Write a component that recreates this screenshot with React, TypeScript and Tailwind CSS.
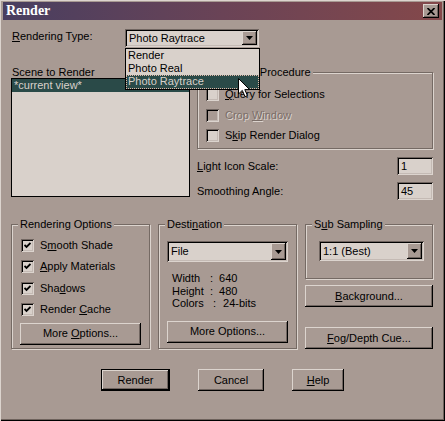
import React from "react";

const bg = "bg-[#a89a93]";
const raised = "shadow-[inset_-1px_-1px_0_#000,inset_1px_1px_0_#dcd4ce,inset_-2px_-2px_0_#706560]";
const sunken = "shadow-[inset_1px_1px_0_#706560,inset_-1px_-1px_0_#dcd4ce,inset_2px_2px_0_#000,inset_-2px_-2px_0_#c4bab4]";
const etched = "border border-[#756a64] shadow-[inset_1px_1px_0_#dcd4ce,1px_1px_0_#dcd4ce]";

function Arrow() {
    return (
        <svg width="7" height="4" viewBox="0 0 7 4"><path d="M0 0h7L3.5 4z" fill="#000" /></svg>
    );
}

function Combo({ value, w, h, children }: { value: string; w: string; h: string; children?: React.ReactNode }) {
    return (
        <div className={`relative ${w} ${h} bg-[#d9d1cb] ${sunken} flex items-center`}>
            <span className="pl-[4px] flex-1 leading-[13px]">{value}</span>
            <div className={`mr-[2px] w-[15px] h-[calc(100%-4px)] ${bg} ${raised} flex items-center justify-center`}>
                <Arrow />
            </div>
            {children}
        </div>
    );
}

function Btn({ w, h = "h-[22px]", def, children }: { w: string; h?: string; def?: boolean; children: React.ReactNode }) {
    return (
        <div className={`${w} ${h} ${def ? "border border-black" : ""} flex`}>
            <div className={`flex-1 ${raised} flex items-center justify-center`}>
                <span className="leading-[13px] whitespace-pre">{children}</span>
            </div>
        </div>
    );
}

function Check({ label, checked, disabled }: { label: React.ReactNode; checked?: boolean; disabled?: boolean }) {
    return (
        <div className="flex items-center h-[13px]">
            <div className={`w-[13px] h-[13px] ${disabled ? bg : "bg-[#d9d1cb]"} ${sunken} flex items-center justify-center`}>
                {checked && (
                    <svg width="7" height="7" viewBox="0 0 7 7"><path d="M0.5 3 L2.5 5 L6.5 1" stroke="#000" strokeWidth="1.8" fill="none" /></svg>
                )}
            </div>
            <span className={`ml-[6px] leading-[13px] whitespace-pre ${disabled ? "text-[#7b6e68] [text-shadow:1px_1px_0_#dcd4ce]" : ""}`}>{label}</span>
        </div>
    );
}

function Group({ title, className, children }: { title: React.ReactNode; className: string; children?: React.ReactNode }) {
    return (
        <div className={`relative ${etched} ${className}`}>
            <span className={`absolute -top-[7px] left-[6px] px-[2px] leading-[13px] whitespace-pre ${bg}`}>{title}</span>
            {children}
        </div>
    );
}

const U = ({ children }: { children: React.ReactNode }) => <span className="underline underline-offset-[1px]">{children}</span>;

export default function App() {
    return (
        <div className={`relative w-[445px] h-[421px] overflow-hidden ${bg} flex flex-col font-['Liberation_Sans',sans-serif] text-[11px] text-black shadow-[inset_1px_1px_0_#dcd4ce,inset_-1px_-1px_0_#000,inset_-2px_-2px_0_#6e625c]`}>
            {/* title bar */}
            <div className="mx-[3px] mt-[2px] h-[18px] bg-gradient-to-r from-[#483e60] via-[#6a4356] to-[#84484a] flex items-center justify-between pl-[3px] pr-[3px]">
                <span className="font-['Liberation_Serif',serif] font-bold text-[14px] leading-[16px] text-white">Render</span>
                <div className={`w-[16px] h-[14px] ${bg} ${raised} flex items-center justify-center`}>
                    <svg width="8" height="7" viewBox="0 0 8 7"><path d="M0.5 0 L7.5 7 M7.5 0 L0.5 7" stroke="#000" strokeWidth="1.7" /></svg>
                </div>
            </div>

            {/* rendering type */}
            <div className="mt-[9px] ml-[12px] flex h-[18px] relative z-10">
                <span className="w-[113px] leading-[13px] pt-[1px]"><U>R</U>endering Type:</span>
                <Combo value="Photo Raytrace" w="w-[134px]" h="h-[18px]">
                    <div className="absolute left-0 top-[19px] w-[135px] h-[42px] bg-[#d9d1cb] border border-black flex flex-col">
                        <div className="h-[13px] leading-[13px] pl-[2px]">Render</div>
                        <div className="h-[13px] leading-[13px] pl-[2px]">Photo Real</div>
                        <div className="h-[14px] leading-[13px] pl-[2px] bg-[#2a4a48] text-[#d9d1cb] outline-1 outline-dotted outline-[#e0b8a8] -outline-offset-1">Photo Raytrace</div>
                    </div>
                </Combo>
            </div>

            {/* scene + procedure */}
            <div className="mt-[19px] ml-[11px] flex h-[134px]">
                <div className="w-[179px] flex flex-col">
                    <span className="h-[12px] leading-[12px] pl-[1px]">Scene to Render</span>
                    <div className="h-[119px] bg-[#d9d1cb] border border-black">
                        <div className="h-[13px] leading-[13px] pl-[2px] bg-[#2a4a48] text-[#d9d1cb]">*current view*</div>
                    </div>
                </div>
                <div className="ml-[7px] w-[236px] flex flex-col">
                    <Group title="Rendering Procedure" className="mt-[6px] h-[77px] pt-[15px] pl-[8px] flex flex-col gap-[7.5px]">
                        <Check label={<><U>Q</U>uery for Selections</>} />
                        <Check label={<>Crop <U>W</U>indow</>} disabled />
                        <Check label={<>S<U>k</U>ip Render Dialog</>} />
                    </Group>
                    <div className="mt-[8px] h-[18px] flex items-center justify-between">
                        <span><U>L</U>ight Icon Scale:</span>
                        <div className={`w-[36px] h-[18px] bg-[#d9d1cb] ${sunken} pl-[4px] leading-[18px]`}>1</div>
                    </div>
                    <div className="mt-[7px] h-[18px] flex items-center justify-between">
                        <span>Smoothing Angle:</span>
                        <div className={`w-[36px] h-[18px] bg-[#d9d1cb] ${sunken} pl-[4px] leading-[18px]`}>45</div>
                    </div>
                </div>
            </div>

            {/* option groups */}
            <div className="mt-[24px] ml-[11px] flex items-start gap-[8px]">
                <Group title="Rendering Options" className="w-[139px] h-[125px] pt-[14px] pl-[8px] flex flex-col">
                    <div className="ml-[1px] flex flex-col gap-[8.3px]">
                        <Check checked label={<>S<U>m</U>ooth Shade</>} />
                        <Check checked label={<><U>A</U>pply Materials</>} />
                        <Check checked label={<>Sha<U>d</U>ows</>} />
                        <Check checked label={<>Render <U>C</U>ache</>} />
                    </div>
                    <div className="mt-[7px]">
                        <Btn w="w-[121px]">More <U>O</U>ptions...</Btn>
                    </div>
                </Group>

                <Group title={<>Desti<U>n</U>ation</>} className="w-[139px] h-[125px] pt-[16px] pl-[8px] flex flex-col">
                    <Combo value="File" w="w-[121px]" h="h-[21px]" />
                    <div className="mt-[10px] ml-[5px] flex flex-col leading-[12.5px]">
                        <div className="flex"><span className="w-[38px]">Width</span><span>:</span><span className="ml-[6px]">640</span></div>
                        <div className="flex"><span className="w-[38px]">Height</span><span>:</span><span className="ml-[6px]">480</span></div>
                        <div className="flex"><span className="w-[41px]">Colors</span><span>:</span><span className="ml-[7px]">24-bits</span></div>
                    </div>
                    <div className="mt-[11px]">
                        <Btn w="w-[121px]">More Options...</Btn>
                    </div>
                </Group>

                <div className="w-[128px] flex flex-col">
                    <Group title={<>S<U>u</U>b Sampling</>} className="h-[55px] pt-[16px] pl-[13px]">
                        <Combo value="1:1 (Best)" w="w-[105px]" h="h-[20px]" />
                    </Group>
                    <div className="mt-[6px]"><Btn w="w-full"><U>B</U>ackground...</Btn></div>
                    <div className="mt-[20px]"><Btn w="w-full"><U>F</U>og/Depth Cue...</Btn></div>
                </div>
            </div>

            {/* dialog buttons */}
            <div className="mt-[20px] flex">
                <div className="ml-[101px]"><Btn w="w-[69px]" def>Render</Btn></div>
                <div className="ml-[28px]"><Btn w="w-[66px]">Cancel</Btn></div>
                <div className="ml-[28px]"><Btn w="w-[52px]"><U>H</U>elp</Btn></div>
            </div>

            {/* mouse pointer */}
            <svg className="absolute left-[238px] top-[78px] z-20" width="13" height="20" viewBox="0 0 13 20">
                <path d="M0.5 0.5 L0.5 16 L4.3 12.4 L7 18.6 L9.4 17.6 L6.8 11.6 L11.6 11.6 Z" fill="#fff" stroke="#000" strokeWidth="1" />
            </svg>
        </div>
    );
}
